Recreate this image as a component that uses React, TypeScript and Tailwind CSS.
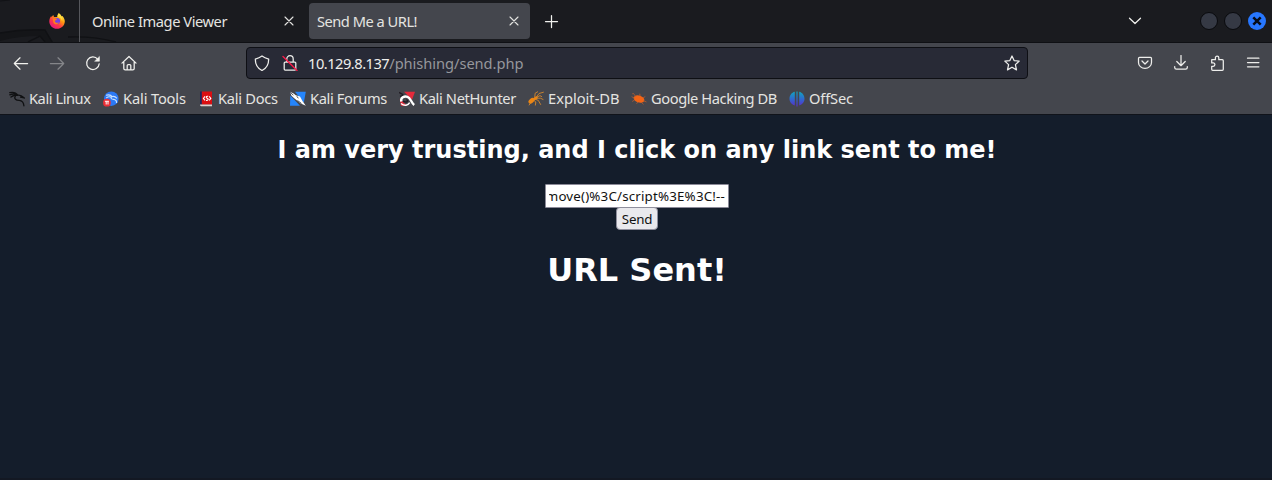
import React from "react";

type IconProps = { children: React.ReactNode; className?: string };

function Icon({ children, className = "" }: IconProps) {
  return (
    <svg
      viewBox="0 0 16 16"
      className={`h-4 w-4 shrink-0 ${className}`}
      fill="none"
      stroke="currentColor"
      strokeWidth="1.25"
      strokeLinecap="round"
      strokeLinejoin="round"
    >
      {children}
    </svg>
  );
}

function Close() {
  return (
    <Icon>
      <path d="M4 4l8 8M12 4l-8 8" strokeWidth="1.1" />
    </Icon>
  );
}

function FirefoxLogo() {
  return (
    <svg viewBox="0 0 16 16" className="h-4 w-4 shrink-0">
      <defs>
        <linearGradient id="ff-body" x1="0.85" y1="0.05" x2="0.15" y2="0.95">
          <stop offset="0" stopColor="#fff44f" />
          <stop offset="0.35" stopColor="#ff980e" />
          <stop offset="0.65" stopColor="#ff3647" />
          <stop offset="1" stopColor="#e31587" />
        </linearGradient>
      </defs>
      <path
        d="M9.8 0.2C11.5 1.4 12 2.8 12.2 3.7L13.4 3C15 4.8 15.8 6.5 15.8 8.5 15.6 12.7 12.2 15.8 8 15.8 3.7 15.8.4 12.5.3 8.5.3 6.4 1 4.4 2.2 3L2.7 4.3C3 3.4 3.5 2.5 4.3 1.9L5 3.9 8.5 4C8.3 2.4 8.8 1.1 9.8.2z"
        fill="url(#ff-body)"
      />
      <circle cx="8" cy="8" r="3.1" fill="#7542e5" />
      <path d="M3.8 5.2L8 5.7 7.5 7 5.8 7.7C5.8 9.5 8 10.5 10 9.2 8.8 12 5 12 4.2 9z" fill="#ff7b20" />
      <path d="M9.8.2C12.5 1.8 14.2 5 13 8 12.6 6 11 4.2 8.5 4 8.3 2.4 8.8 1.1 9.8.2z" fill="#ffdc3e" />
    </svg>
  );
}

function KaliLinux() {
  return (
    <svg viewBox="0 0 16 16" className="h-4 w-4 shrink-0" fill="none" stroke="#101113" strokeWidth="1.35" strokeLinecap="round">
      <path d="M.8 1.6C4 1 7 1.5 8.6 4M.8 3.8C3.5 2.7 5.8 2.8 7.8 4M2 6C4 4.4 6 4 8 4.4" />
      <path d="M6.3 5.2C4.6 7.8 7 9.2 10.2 9.4 13.2 9.6 14.6 11.5 14.9 14.8" />
      <path d="M8 4.4C10.5 3.4 12.8 4.6 15 6.8L11.6 6.2" />
    </svg>
  );
}

function KaliTools() {
  return (
    <svg viewBox="0 0 16 16" className="h-4 w-4 shrink-0">
      <circle cx="8.3" cy="7.7" r="7.3" fill="#2b79f5" />
      <path d="M3 4.2C6 3.5 8.3 4 9.2 6M3.2 7C5 5.6 7 5.5 8.2 6.3 7.5 8.2 9.7 8.2 11.3 8.5 13 8.8 13.7 10.5 13.6 12M9 5.6C11 5 12.8 6 14 7.3" fill="none" stroke="#c9e1ff" strokeWidth="1.1" />
      <circle cx="3.9" cy="11.7" r="3.9" fill="#e92e36" />
      <path d="M1.9 10.3h4M3.2 10.5v3M5 10.5v3" stroke="#fff" fill="none" />
    </svg>
  );
}

function KaliDocs() {
  return (
    <svg viewBox="0 0 16 16" className="h-4 w-4 shrink-0">
      <path d="M2 .5h2v13H2z" fill="#20275c" />
      <path d="M3.8 .5h10.2v13.2H3.8z" fill="#db0e12" />
      <path d="M2 13.5h12v1.8H3Q2 15.3 2 13.5z" fill="#d9d1d1" />
      <path d="M7 5.4L5.4 7.4 7 9.4M11.2 5.4L12.8 7.4 11.2 9.4M10.2 5.2C7.4 5 8 6.9 9.3 7.3 11 8 9.8 9.9 8 9.3" fill="none" stroke="#fff" strokeWidth="1.1" />
    </svg>
  );
}

function KaliForums() {
  return (
    <svg viewBox="0 0 16 16" className="h-4 w-4 shrink-0">
      <path d="M5 .8h10.8l-2 11zM.3 4.5L10 14.8H0z" fill="#2585fb" />
      <path d="M0 .8L3.6 2.4 5.7 4.2 10 5.5 12.5 10 15.8 14.8 10.3 12.2 6.4 9 4.2 7.2 1.5 4.8z" fill="#fff" />
      <path d="M.3 1.2L3.4 4.3M7.5 9.5L11.4 12.4M6.8 5.2L8.3 7.3" stroke="#222b36" strokeWidth=".8" />
    </svg>
  );
}

function KaliNetHunter() {
  return (
    <svg viewBox="0 0 16 16" className="h-4 w-4 shrink-0">
      <path d="M5 .8h11l-3 8zM.8 8L8 14.8H2z" fill="#e52a3b" />
      <path d="M0 1.4L4 3.6M1 5.3L5 4" stroke="#211d25" strokeWidth="1.3" />
      <path d="M2.3 10.5C1.5 6.6 5 4.8 8.5 5.8 11.7 6.9 12 11.5 15.2 14" fill="none" stroke="#fff" strokeWidth="2.4" />
      <path d="M4 10.3C8 12.2 10.2 9.8 7.4 8.6" fill="none" stroke="#211d25" strokeWidth="1.5" />
      <path d="M2 12.5C5.5 15.3 9 14.4 10.7 11.6" fill="none" stroke="#fff" strokeWidth="1.5" />
    </svg>
  );
}

function ExploitDb() {
  return (
    <svg viewBox="0 0 16 16" className="h-4 w-4 shrink-0">
      <g fill="#ed8512">
        <ellipse cx="3.5" cy="9.7" rx="3.5" ry="2.2" transform="rotate(-38 3.5 9.7)" />
        <ellipse cx="7.5" cy="7.2" rx="2.5" ry="1.4" transform="rotate(-30 7.5 7.2)" />
      </g>
      <path d="M6.7 6.5L7.2 2.2 10 .6M8.5 6L11 2.5 15.8 1.1M9 6.2L12 4.6 14 5.8M8.5 7.2L12.4 7.2 15.4 8.6M7.5 8.3L10.3 9.4 12.8 13.8M5.5 9L7.8 11 7.3 14.5M3 10.8L1 14.3" fill="none" stroke="#dc8b2c" strokeWidth=".85" />
    </svg>
  );
}

function GoogleHacking() {
  return (
    <svg viewBox="0 0 16 16" className="h-4 w-4 shrink-0">
      <ellipse cx="8" cy="8" rx="5.5" ry="3.5" transform="rotate(18 8 8)" fill="#f36415" />
      <path d="M5 6L2.5 2.5 1.2 2.8M9 5L8.8 2.7M4 7.4L.6 5.7M3.5 9L1.2 10.5M7 11L5.5 12.8M10 11L12.5 13.3M12 9.5L15.5 11M12 7L14.3 5.5" fill="none" stroke="#c6602c" strokeWidth=".7" />
    </svg>
  );
}

function OffSec() {
  return (
    <svg viewBox="0 0 16 16" className="h-4 w-4 shrink-0">
      <defs>
        <linearGradient id="offsec" x2="0" y2="1">
          <stop stopColor="#10a6bc" />
          <stop offset=".5" stopColor="#2e69cf" />
          <stop offset="1" stopColor="#5b2bc9" />
        </linearGradient>
      </defs>
      <path d="M5.8 .8V14.5C2.7 13.6.5 11 .5 7.8.5 4.3 2.7 1.5 5.8 .8zM7.4.5h1.2v15H7.4zM10.2 .8C13.3 1.5 15.5 4.3 15.5 7.8 15.5 11 13.3 13.6 10.2 14.5z" fill="url(#offsec)" />
    </svg>
  );
}

const bookmarks = [
  { label: "Kali Linux", icon: KaliLinux, width: "w-[94px]", tracking: "tracking-[-0.45px]" },
  { label: "Kali Tools", icon: KaliTools, width: "w-[95px]", tracking: "tracking-[-0.15px]" },
  { label: "Kali Docs", icon: KaliDocs, width: "w-[92px]", tracking: "tracking-[-0.28px]" },
  { label: "Kali Forums", icon: KaliForums, width: "w-[109px]", tracking: "tracking-[-0.36px]" },
  { label: "Kali NetHunter", icon: KaliNetHunter, width: "w-[129px]", tracking: "tracking-[-0.36px]" },
  { label: "Exploit-DB", icon: ExploitDb, width: "w-[103px]", tracking: "tracking-[0px]" },
  { label: "Google Hacking DB", icon: GoogleHacking, width: "w-[158px]", tracking: "tracking-[-0.42px]" },
  { label: "OffSec", icon: OffSec, width: "w-[70px]", tracking: "tracking-[-0.17px]" },
];

function TabStrip() {
  return (
    <div className="relative flex h-[43px] shrink-0 border-b border-[#0f1014] bg-[#1a1b1f]">
      <svg className="absolute left-0 top-0 h-[42px] w-[125px]" viewBox="0 0 125 42" fill="none">
        <path d="M0 33Q22 29 45 30L53 42H45L40 36Q18 36 0 41z" fill="#141518" />
        <path d="M0 33Q22 29 45 30L52 42M28 42L40 36L45 42M68 37Q94 36 116 42" stroke="#101114" strokeWidth="1.4" />
        <path d="M0 1L10 0" stroke="#111216" />
      </svg>
      <div className="relative flex w-20 items-center border-r border-[#56575c] pl-[49px]">
        <FirefoxLogo />
      </div>
      <div className="relative flex w-[229px] items-center justify-between pl-3 pr-3">
        <span className="tracking-[-0.45px]">Online Image Viewer</span>
        <Close />
      </div>
      <div className="mt-[3px] flex h-9 w-[221px] items-center justify-between rounded bg-[#44464d] pl-2 pr-2">
        <span className="tracking-[-0.5px]">Send Me a URL!</span>
        <Close />
      </div>
      <div className="flex flex-1 items-center justify-between pl-[13px] pr-[6px] text-[#f1f1ee]">
        <Icon>
          <path d="M8.5 2.5v12M2.5 8.5h12" />
        </Icon>
        <div className="flex items-center">
          <Icon className="mr-[57px]">
            <path d="M2.5 5.2L8 10.5l5.5-5.3" />
          </Icon>
          <div className="flex gap-[6px]">
            <i className="size-[18px] rounded-full border border-[#090a0d] bg-[#353944]" />
            <i className="size-[18px] rounded-full border border-[#090a0d] bg-[#353944]" />
            <svg viewBox="0 0 18 18" className="size-[18px]">
              <circle cx="9" cy="9" r="9" fill="#2777ff" />
              <path d="M5.3 5.3l7.4 7.4M12.7 5.3l-7.4 7.4" stroke="#070d19" strokeWidth="2.5" />
            </svg>
          </div>
        </div>
      </div>
    </div>
  );
}

function NavigationBar() {
  return (
    <div className="flex h-10 shrink-0 items-center pl-[13px] pr-[11px]">
      <div className="flex w-[233px] gap-5 text-[#f1f1ee]">
        <Icon><path d="M14.6 8.5H1.3M7 2.8L1.3 8.5 7 14.2" /></Icon>
        <Icon className="text-[#85868a]"><path d="M1.4 8.5h13.3M9 2.8l5.7 5.7L9 14.2" /></Icon>
        <Icon><path d="M12.8 4.3A6.3 6.3 0 1 0 14.2 8.8" /><path d="M14.4 1.8v4.4H10z" fill="currentColor" strokeWidth=".6" /></Icon>
        <Icon><path d="M1 8.1L8 1.5l7 6.6M2.8 7.2v6.3q0 1.4 1.4 1.4h7.6q1.4 0 1.4-1.4V7.2M6.2 14.8v-4.2q0-1 1-1h1.6q1 0 1 1v4.2" /></Icon>
      </div>
      <div className="flex h-8 w-[782px] items-center rounded border border-[#0e0f14] bg-[#282a36] pl-[7px] pr-[7px] text-[#eeeeec]">
        <Icon><path d="M8 .9Q10.7 2.8 14.7 4.1C14.7 9.7 12.6 13.4 8 15.5 3.4 13.4 1.3 9.7 1.3 4.1Q5.3 2.8 8 .9z" /></Icon>
        <Icon className="ml-3">
          <path d="M4.8 7V3.9a3.2 3.2 0 0 1 6.4 0V7M3.2 7h9.6q1 0 1 1v6q0 1-1 1H3.2q-1 0-1-1V8q0-1 1-1z" />
          <path d="M1 1.5l14 14" stroke="#f71948" strokeWidth="1.35" />
        </Icon>
        <div className="ml-[10px] flex-1 whitespace-nowrap tracking-[-0.5px]">10.129.8.137<span className="tracking-[-0.05px] text-[#96979c]">/phishing/send.php</span></div>
        <Icon><path d="M8 1l2.1 4.6 5.1.5-3.8 3.5 1.1 5.3L8 12.2l-4.5 2.7 1.1-5.3L.8 6.1l5.1-.5z" /></Icon>
      </div>
      <div className="ml-auto flex gap-5 text-[#eeeeec]">
        <Icon><path d="M2.5 2.4h11q1 0 1 1v4a6.5 6 0 0 1-13 0v-4q0-1 1-1zM5 6l3 3 3-3" /></Icon>
        <Icon><path d="M8 .5v10M3.8 6.5L8 10.7l4.2-4.2M1.7 11.5v1q0 1.7 1.7 1.7h9.2q1.7 0 1.7-1.7v-1" /></Icon>
        <Icon><path d="M2.7 4.7h3.7V2.8a1.7 1.7 0 0 1 3.4 0v1.9h3.5q1 0 1 1v8.6q0 1-1 1H3.7q-1 0-1-1v-3h1.5a1.7 1.7 0 0 0 0-3.4H2.7z" /></Icon>
        <Icon><path d="M2.5 3.2h11.4M2.5 7.5h11.4M2.5 11.8h11.4" /></Icon>
      </div>
    </div>
  );
}

function BookmarksBar() {
  return (
    <div className="flex h-8 shrink-0 items-center border-b border-[#10131a] pl-[9px]">
      {bookmarks.map(({ label, icon: BookmarkIcon, width, tracking }) => (
        <div key={label} className={`flex shrink-0 items-center gap-1 whitespace-nowrap ${width} ${tracking}`}>
          <BookmarkIcon />
          <span className="pb-[2px]">{label}</span>
        </div>
      ))}
    </div>
  );
}

export default function App() {
  return (
    <div className="flex h-[480px] w-[1272px] flex-col overflow-hidden bg-[#44464d] font-['Noto_Sans',sans-serif] text-[14.667px] leading-5 text-[#e4e4e1]">
      <TabStrip />
      <NavigationBar />
      <BookmarksBar />
      <main className="flex min-h-0 flex-1 flex-col items-center border-b-2 border-[#131823] bg-[#141d2b] pl-[2px] pt-[21px] font-['DejaVu_Sans',sans-serif] font-bold text-white">
        <h2 className="h-[29px] text-[24px] leading-[29px]">I am very trusting, and I click on any link sent to me!</h2>
        <div className="mt-[19px] flex h-6 w-[184px] items-center rounded-[1px] border border-[#8b8a98] bg-white px-[3px] font-['Noto_Sans',sans-serif] text-[13.333px] font-normal text-[#111]">
          <div className="flex w-full justify-end overflow-hidden whitespace-nowrap tracking-[0.18px]">move()%3C/script%3E%3C!--</div>
        </div>
        <button className="-mt-px h-[23px] w-[42px] rounded border border-[#8f8f9d] bg-[#e9e9ed] pt-px font-['Noto_Sans',sans-serif] text-[13.333px] font-normal leading-[21px] tracking-[-0.2px] text-[#111]">Send</button>
        <h1 className="mt-[22px] h-[37px] text-[32px] leading-[37px]">URL Sent!</h1>
      </main>
    </div>
  );
}
